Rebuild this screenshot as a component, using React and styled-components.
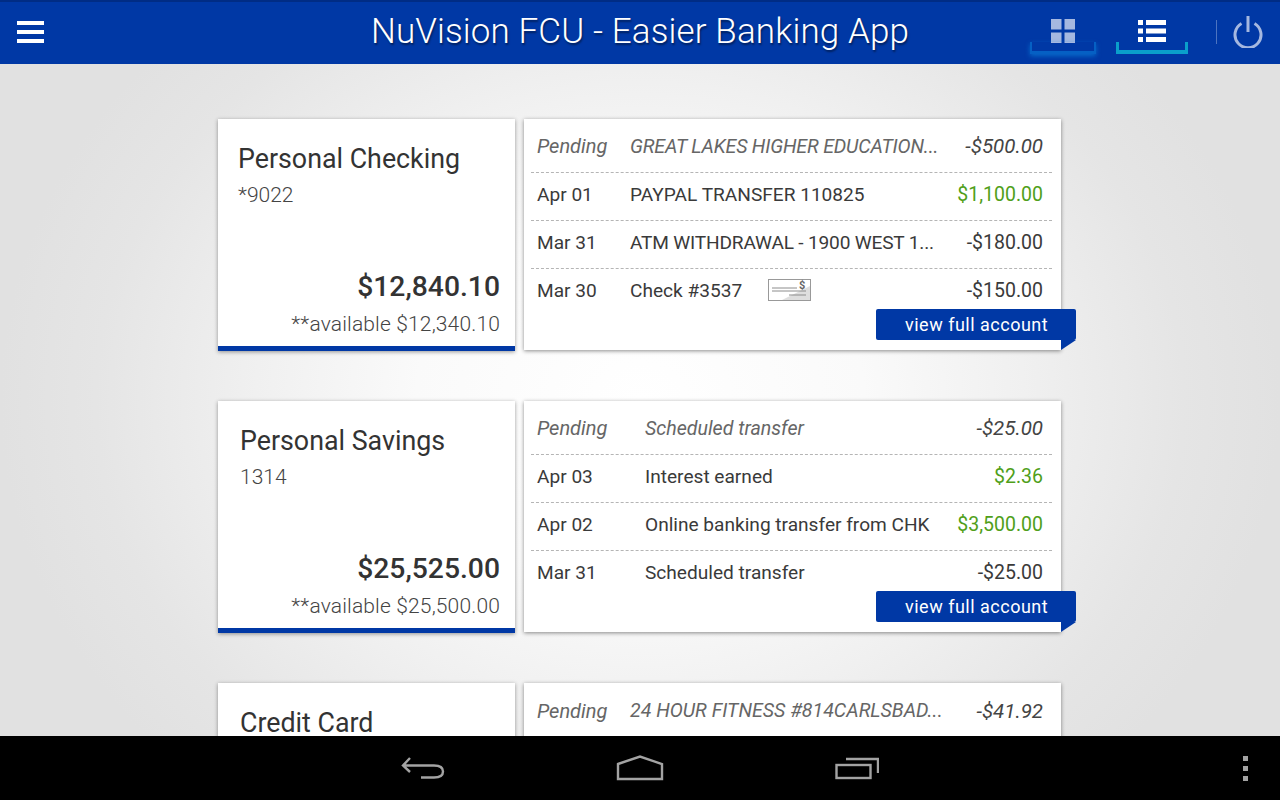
import styled, { createGlobalStyle } from "styled-components";

const accounts = [
	{
		name: "Personal Checking",
		number: "*9022",
		balance: "$12,840.10",
		available: "**available $12,340.10",
		nameLeft: 20,
		dateWidth: 93,
		rows: [
			{ date: "Pending", text: "GREAT LAKES HIGHER EDUCATION...", amount: "-$500.00", pending: true, tight: true },
			{ date: "Apr 01", text: "PAYPAL TRANSFER 110825", amount: "$1,100.00", credit: true },
			{ date: "Mar 31", text: "ATM WITHDRAWAL - 1900 WEST 1...", amount: "-$180.00", tight: true },
			{ date: "Mar 30", text: "Check #3537", amount: "-$150.00", check: true },
		],
	},
	{
		name: "Personal Savings",
		number: "1314",
		balance: "$25,525.00",
		available: "**available $25,500.00",
		nameLeft: 22,
		dateWidth: 108,
		rows: [
			{ date: "Pending", text: "Scheduled transfer", amount: "-$25.00", pending: true },
			{ date: "Apr 03", text: "Interest earned", amount: "$2.36", credit: true },
			{ date: "Apr 02", text: "Online banking transfer from CHK", amount: "$3,500.00", credit: true },
			{ date: "Mar 31", text: "Scheduled transfer", amount: "-$25.00" },
		],
	},
	{
		name: "Credit Card",
		number: "",
		balance: "",
		available: "",
		nameLeft: 22,
		dateWidth: 93,
		rows: [
			{ date: "Pending", text: "24 HOUR FITNESS #814CARLSBAD...", amount: "-$41.92", pending: true },
		],
	},
];

const GlobalStyle = createGlobalStyle`
	html, body {
		margin: 0;
		height: 100%;
		overflow: hidden;
		font-family: Roboto, "Liberation Sans", sans-serif;
	}
`;

const Screen = styled.div`
	width: 1280px;
	height: 800px;
	display: flex;
	flex-direction: column;
`;

const Header = styled.header`
	height: 64px;
	flex: none;
	box-sizing: border-box;
	display: grid;
	grid-template-columns: 1fr auto 1fr;
	align-items: center;
	background: #0038a5;
	border-top: 2px solid #002c85;
`;

const MenuButton = styled.div`
	padding-left: 17px;
	display: flex;
	flex-direction: column;
	gap: 5px;
	margin-top: -2px;
`;

const MenuLine = styled.span`
	display: block;
	width: 27px;
	height: 4px;
	background: #fff;
`;

const Title = styled.h1`
	margin: 0 0 4px;
	font-size: 35px;
	font-weight: 300;
	letter-spacing: 0.12px;
	color: #fff;
	white-space: nowrap;
	text-shadow: 1px 2px 2px rgba(0, 0, 0, 0.45);
`;

const HeaderActions = styled.div`
	display: flex;
	align-items: flex-start;
	justify-content: flex-end;
	height: 62px;
	padding-right: 17px;
`;

const ViewTab = styled.div`
	position: relative;
	width: ${(p) => p.$width}px;
	margin-right: ${(p) => p.$gap}px;
	height: 62px;
	display: flex;
	justify-content: center;
	padding-top: 17px;
	box-sizing: border-box;
`;

const TabBracket = styled.span`
	position: absolute;
	left: 0;
	right: 0;
	top: 40px;
	height: 12px;
	box-sizing: border-box;
	border: 3px solid ${(p) => (p.$active ? "#0a9fcb" : "#0560c4")};
	border-top: 0;
	${(p) => (p.$active ? "border-bottom-width: 4px;" : "box-shadow: 0 2px 5px rgba(10, 130, 220, 0.7); border-width: 0 2px 3px;")}
`;

const Divider = styled.span`
	width: 1px;
	height: 24px;
	margin: 18px 16px 0 0;
	background: rgba(255, 255, 255, 0.3);
`;

const PowerIcon = styled.svg`
	margin-top: 13px;
`;

const Main = styled.main`
	flex: 1;
	min-height: 0;
	overflow: hidden;
	display: flex;
	flex-direction: column;
	gap: 50px;
	padding: 55px 0 0 218px;
	background: radial-gradient(ellipse 640px 530px at 640px 336px, #ffffff 0%, #fafafa 35%, #f0f0f0 60%, #e5e5e5 85%, #e1e1e1 100%);
`;

const AccountRow = styled.section`
	display: flex;
	gap: 9px;
	flex: none;
	height: 232px;
`;

const Summary = styled.div`
	width: 297px;
	height: 232px;
	box-sizing: border-box;
	background: #fff;
	border-bottom: 5px solid #0038a5;
	padding: 24px 15px 0 ${(p) => p.$left}px;
	display: flex;
	flex-direction: column;
	box-shadow: 0 1px 4px rgba(0, 0, 0, 0.4);
`;

const AccountName = styled.div`
	font-size: 26.8px;
	line-height: 32px;
	color: #333;
`;

const AccountNumber = styled.div`
	margin-top: 8px;
	height: 24px;
	font-size: 21px;
	line-height: 24px;
	font-weight: 300;
	color: #444;
`;

const Balance = styled.div`
	margin-top: 62px;
	text-align: right;
	font-size: 28.3px;
	line-height: 36px;
	font-weight: 500;
	color: #333;
`;

const Available = styled.div`
	margin-top: 7px;
	text-align: right;
	font-size: 21px;
	line-height: 24px;
	font-weight: 300;
	letter-spacing: 0.15px;
	color: #444;
	white-space: nowrap;
`;

const Activity = styled.div`
	position: relative;
	width: 537px;
	height: 231px;
	box-sizing: border-box;
	background: #fff;
	padding: 6px 9px 0 7px;
	box-shadow: 0 1px 4px rgba(0, 0, 0, 0.45);
`;

const Row = styled.div`
	display: flex;
	align-items: center;
	height: 48px;
	box-sizing: border-box;
	padding: 0 0 5px 6px;
	font-size: ${(p) => (p.$pending ? "19.6px" : "19.1px")};
	color: ${(p) => (p.$pending ? "#666" : "#3a3a3a")};
	font-style: ${(p) => (p.$pending ? "italic" : "normal")};
	border-bottom: 1px dashed #b5b5b5;
	&:last-of-type {
		border-bottom: 0;
	}
`;

const DateCell = styled.span`
	width: ${(p) => p.$width}px;
	flex: none;
	font-size: ${(p) => (p.$pending ? "20px" : "inherit")};
`;

const Description = styled.span`
	flex: 1;
	white-space: nowrap;
	display: flex;
	align-items: center;
	gap: 26px;
	letter-spacing: ${(p) => (p.$tight ? "-0.18px" : "normal")};
`;

const Amount = styled.span`
	padding-right: 9px;
	font-size: ${(p) => (p.$pending ? "20.5px" : "19.5px")};
	color: ${(p) => (p.$credit ? "#509f1a" : p.$pending ? "#444" : "#3a3a3a")};
`;

const FullAccount = styled.a`
	position: absolute;
	top: 190px;
	right: -15px;
	width: 200px;
	height: 31px;
	box-sizing: border-box;
	padding-left: 29px;
	background: #0038a5;
	border-radius: 2px;
	color: #fff;
	font-size: 18px;
	line-height: 31px;
	letter-spacing: 0.5px;
	&::after {
		content: "";
		position: absolute;
		right: 0;
		top: 31px;
		border-style: solid;
		border-width: 10px 15px 0 0;
		border-color: #0038a5 transparent transparent transparent;
	}
`;

const NavBar = styled.nav`
	height: 64px;
	flex: none;
	background: #000;
	display: grid;
	grid-template-columns: 1fr auto 1fr;
	align-items: center;
	color: #a3a3a3;
`;

const NavKeys = styled.div`
	display: flex;
	align-items: center;
	gap: 171px;
`;

const NavMenu = styled.div`
	justify-self: end;
	margin-right: 32px;
	display: flex;
	flex-direction: column;
	gap: 5px;
`;

const NavDot = styled.span`
	width: 5px;
	height: 5px;
	background: #a3a3a3;
`;

const CheckIcon = () => (
	<svg width="44" height="23" viewBox="0 0 44 23">
		<rect x="0.5" y="0.5" width="42" height="21" fill="#fff" stroke="#999" />
		<path d="M14 21 L42 7 V21 Z" fill="#dedede" />
		<path d="M4 9H29M4 12H38M21 16H38" stroke="#8c8c8c" strokeWidth="1" />
		<text x="31" y="10" fontSize="11" fontWeight="700" fill="#666" fontFamily="Roboto, sans-serif">$</text>
	</svg>
);

const GridIcon = () => (
	<svg width="24" height="24" viewBox="0 0 24 24" fill="#a5b8e0">
		<rect x="0" y="0" width="10.5" height="10.5" />
		<rect x="13.5" y="0" width="10.5" height="10.5" />
		<rect x="0" y="13.5" width="10.5" height="10.5" />
		<rect x="13.5" y="13.5" width="10.5" height="10.5" />
	</svg>
);

const ListIcon = () => (
	<svg width="28" height="24" viewBox="0 0 28 24" fill="#fff">
		<rect x="0" y="1" width="5" height="5" />
		<rect x="8" y="1" width="20" height="5" />
		<rect x="0" y="9.5" width="5" height="5" />
		<rect x="8" y="9.5" width="20" height="5" />
		<rect x="0" y="18" width="5" height="5" />
		<rect x="8" y="18" width="20" height="5" />
	</svg>
);

const BackIcon = () => (
	<svg width="44" height="24" viewBox="0 0 44 24" fill="none" stroke="currentColor" strokeWidth="2.4">
		<path d="M9 2 L2 9.5 L9 16 M2 9.5 H33 C38 9.5 42 11 42 15.5 C42 20 38 21.5 33 21.5 H20" />
	</svg>
);

const HomeIcon = () => (
	<svg width="48" height="26" viewBox="0 0 48 26" fill="none" stroke="currentColor" strokeWidth="2.4">
		<path d="M2 9 L24 1.5 L46 9 V24 H2 Z" />
	</svg>
);

const RecentsIcon = () => (
	<svg width="44" height="24" viewBox="0 0 44 24" fill="none" stroke="currentColor" strokeWidth="2.4">
		<rect x="1.5" y="9" width="34" height="13" />
		<path d="M11 3 H43 V17" />
	</svg>
);

const App = () => {
	return (
		<Screen>
			<GlobalStyle />
			<Header>
				<MenuButton>
					<MenuLine />
					<MenuLine />
					<MenuLine />
				</MenuButton>
				<Title>NuVision FCU - Easier Banking App</Title>
				<HeaderActions>
					<ViewTab $width={66} $gap={20}>
						<GridIcon />
						<TabBracket />
					</ViewTab>
					<ViewTab $width={72} $gap={28} $active>
						<ListIcon />
						<TabBracket $active />
					</ViewTab>
					<Divider />
					<PowerIcon width="30" height="33" viewBox="0 0 30 33" fill="none" stroke="#a5b8e0" strokeWidth="3">
						<path d="M8.5 8.5 A13 13 0 1 0 21.5 8.5" />
						<path d="M15 1 V17" />
					</PowerIcon>
				</HeaderActions>
			</Header>
			<Main>
				{accounts.map((account) => (
					<AccountRow key={account.name}>
						<Summary $left={account.nameLeft}>
							<AccountName>{account.name}</AccountName>
							<AccountNumber>{account.number}</AccountNumber>
							<Balance>{account.balance}</Balance>
							<Available>{account.available}</Available>
						</Summary>
						<Activity>
							{account.rows.map((row) => (
								<Row key={row.date + row.text} $pending={row.pending}>
									<DateCell $width={account.dateWidth} $pending={row.pending}>{row.date}</DateCell>
									<Description $tight={row.tight}>
										{row.text}
										{row.check && <CheckIcon />}
									</Description>
									<Amount $credit={row.credit} $pending={row.pending}>
										{row.amount}
									</Amount>
								</Row>
							))}
							{account.rows.length === 4 && <FullAccount>view full account</FullAccount>}
						</Activity>
					</AccountRow>
				))}
			</Main>
			<NavBar>
				<span />
				<NavKeys>
					<BackIcon />
					<HomeIcon />
					<RecentsIcon />
				</NavKeys>
				<NavMenu>
					<NavDot />
					<NavDot />
					<NavDot />
				</NavMenu>
			</NavBar>
		</Screen>
	);
};

export default App;
